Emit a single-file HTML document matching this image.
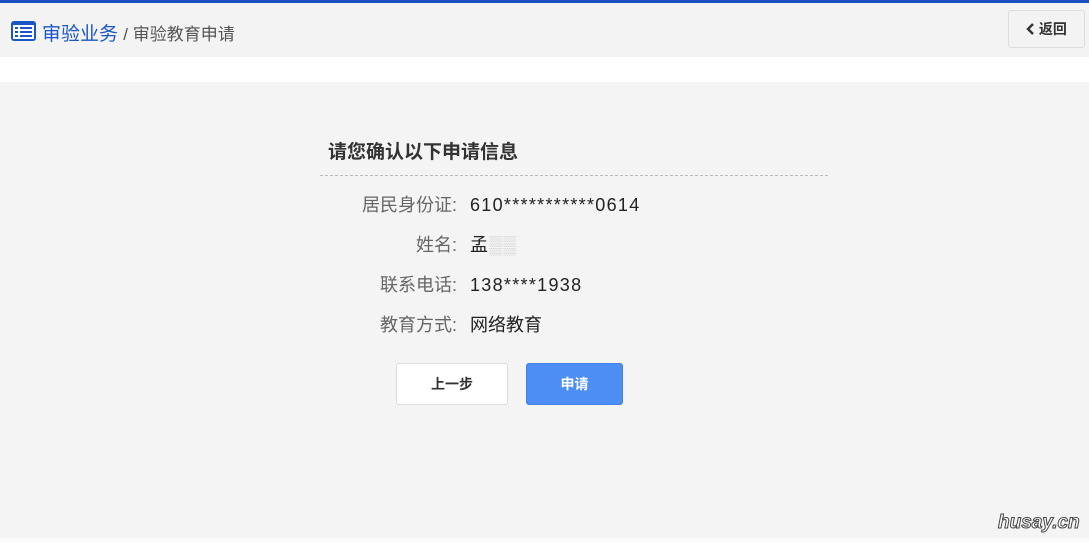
<!DOCTYPE html>
<html><head><meta charset="utf-8"><style>
body{margin:0;width:1089px;height:542px;background:#f4f4f4;font-family:"Liberation Sans","Noto Sans CJK SC",sans-serif;position:relative;overflow:hidden}
.top{position:absolute;left:0;top:0;width:1089px;height:3px;background:#1c4fc4}
.hdr{position:absolute;left:0;top:3px;width:1089px;height:54px;background:#f3f3f3}
.white{position:absolute;left:0;top:57px;width:1089px;height:25px;background:#fff}
.bc{position:absolute;left:42px;top:19px;font-size:19px;color:#1a56c8;white-space:nowrap}
.bc span{color:#555;font-size:17px}
.back{position:absolute;left:1008px;top:10px;width:75px;height:36px;border:1px solid #ddd;border-radius:3px;background:#f3f3f3;font-size:14px;font-weight:bold;color:#333;line-height:36px;text-align:center}
.title{position:absolute;left:328px;top:137px;font-size:19px;font-weight:bold;color:#333}
.line{position:absolute;left:320px;top:175px;width:508px;border-top:1px dashed #bbb}
.row{position:absolute;left:300px;font-size:18px;white-space:nowrap}
.row b{display:inline-block;width:157px;text-align:right;font-weight:normal;color:#666;margin-right:13px}
.row i{font-style:normal;color:#222;letter-spacing:1.3px}
.btn{position:absolute;top:363px;height:40px;line-height:40px;text-align:center;font-size:14px;font-weight:bold;border-radius:3px}
.bottom{position:absolute;left:0;top:538px;width:1089px;height:4px;background:#fafafa}
.wm{position:absolute;left:998px;top:512px;font-size:19px;font-weight:bold;font-style:italic;color:#fff;-webkit-text-stroke:1px #444}
</style></head><body>
<div class="top"></div><div class="hdr"></div><div class="white"></div>
<svg style="position:absolute;left:10px;top:20px" width="27" height="22" viewBox="0 0 27 22"><rect x="1" y="1" width="25" height="20" rx="3" fill="#1a56c8"/><rect x="3" y="5" width="21" height="14" fill="#fff"/><g fill="#1a56c8"><rect x="5" y="7" width="3" height="2"/><rect x="10" y="7" width="12" height="2"/><rect x="5" y="11" width="3" height="2"/><rect x="10" y="11" width="12" height="2"/><rect x="5" y="15" width="3" height="2"/><rect x="10" y="15" width="12" height="2"/></g></svg>
<div class="bc">审验业务 <span>/ 审验教育申请</span></div>
<div class="back"><svg width="9" height="12" viewBox="0 0 9 12" style="vertical-align:-1px"><path d="M7 1L2 6l5 5" fill="none" stroke="#333" stroke-width="2.4"/></svg> 返回</div>
<div class="title">请您确认以下申请信息</div>
<div class="line"></div>
<div class="row" style="top:191px"><b>居民身份证:</b><i>610***********0614</i></div>
<div class="row" style="top:231px"><b>姓名:</b><i>孟<span style="color:#ccc">▒▒</span></i></div>
<div class="row" style="top:271px"><b>联系电话:</b><i>138****1938</i></div>
<div class="row" style="top:311px"><b>教育方式:</b><i style="letter-spacing:0">网络教育</i></div>
<div class="btn" style="left:396px;width:110px;background:#fff;border:1px solid #ddd;color:#333">上一步</div>
<div class="btn" style="left:526px;width:95px;background:#4d8ef5;color:#fff;border:1px solid #3f80ea">申请</div>
<div class="bottom"></div>
<div class="wm">husay.cn</div>
</body></html>
